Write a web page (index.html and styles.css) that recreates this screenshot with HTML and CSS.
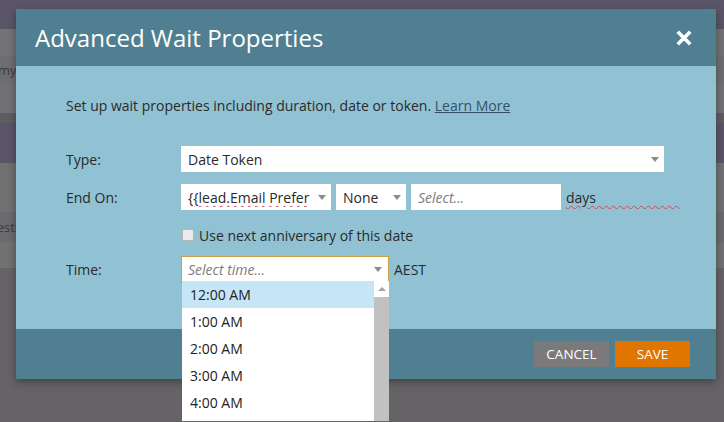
FILE: index.html
```html
<!DOCTYPE html>
<html>
<head>
<meta charset="utf-8">
<title>Advanced Wait Properties</title>
<link rel="stylesheet" href="styles.css">
</head>
<body>
<div class="page">
  <div class="band band-top"></div>
  <div class="band band-a"></div>
  <div class="band band-b"><span class="bg-text">my.</span></div>
  <div class="band band-a2"></div>
  <div class="band band-sep"></div>
  <div class="band band-nav"></div>
  <div class="band band-c"></div>
  <div class="band band-d"><span class="bg-text shift">testi</span></div>
  <div class="band band-e"></div>
</div>

<div class="modal">
  <div class="modal-header">
    <h1 class="modal-title">Advanced Wait Properties</h1>
    <span class="close">
      <svg width="16" height="16" viewBox="0 0 16 16"><path d="M3 3 L13 13 M13 3 L3 13" stroke="#fff" stroke-width="3.6" stroke-linecap="square"/></svg>
    </span>
  </div>
  <div class="modal-body">
    <p class="intro">Set up wait properties including duration, date or token. <a class="learn">Learn More</a></p>
    <div class="form">
      <div class="label">Type:</div>
      <div class="field">
        <div class="select select-type"><span class="sel-text">Date Token</span><i class="caret"></i></div>
      </div>

      <div class="label">End On:</div>
      <div class="field">
        <div class="select select-token"><span class="sel-text clip"><span class="spell">{{lead.Email Prefer</span></span><i class="caret"></i></div>
        <div class="select select-none"><span class="sel-text">None</span><i class="caret"></i></div>
        <div class="input-box"><span class="placeholder">Select...</span></div>
        <span class="unit spell">days                       </span>
      </div>

      <div class="label label-short"></div>
      <div class="field check-row">
        <span class="checkbox"></span>
        <span class="check-label">Use next anniversary of this date</span>
      </div>

      <div class="label">Time:</div>
      <div class="field">
        <div class="time-wrap">
          <div class="select select-time"><span class="placeholder">Select time...</span><i class="caret"></i></div>
          <div class="dropdown">
            <ul class="options">
              <li class="option active">12:00 AM</li>
              <li class="option">1:00 AM</li>
              <li class="option">2:00 AM</li>
              <li class="option">3:00 AM</li>
              <li class="option">4:00 AM</li>
            </ul>
            <div class="scrollbar">
              <div class="scroll-up"><i class="up-caret"></i></div>
              <div class="scroll-thumb"></div>
            </div>
          </div>
        </div>
        <span class="unit">AEST</span>
      </div>
    </div>
  </div>
  <div class="modal-footer">
    <button class="btn btn-cancel">CANCEL</button>
    <button class="btn btn-save">SAVE</button>
  </div>
</div>
</body>
</html>
```

FILE: styles.css
```css
* { box-sizing: border-box; }

html, body {
  margin: 0;
  padding: 0;
}

body {
  width: 724px;
  height: 422px;
  overflow: hidden;
  position: relative;
  background: #656366;
  font-family: "Open Sans", "Liberation Sans", sans-serif;
  color: #2e2e2e;
}

/* dimmed background page */
.page {
  display: flex;
  flex-direction: column;
}
.band { width: 100%; }
.band-top { height: 29px; background: #5a5668; }
.band-a { height: 27px; background: #737274; }
.band-b { height: 27px; background: #6e6d6f; display: flex; align-items: center; }
.band-a2 { height: 30px; background: #727173; }
.band-sep { height: 10px; background: #5f5d60; }
.band-nav { height: 40px; background: #5a5668; }
.band-c { height: 49px; background: #717072; }
.band-d { height: 30px; background: #6b6a6c; display: flex; align-items: center; }
.band-e { height: 26px; background: #717072; }

.bg-text {
  font-size: 13px;
  color: #3c3b3e;
  white-space: nowrap;
  margin-left: -2px;
}
.bg-text.shift { margin-left: -8px; }

/* modal */
.modal {
  position: absolute;
  left: 16px;
  top: 9px;
  width: 700px;
  box-shadow: 0 3px 8px rgba(0, 0, 0, 0.35);
  z-index: 2;
}

.modal-header {
  height: 57px;
  background: #507f92;
  display: flex;
  align-items: center;
  justify-content: space-between;
  padding: 0 24px 0 19px;
}
.modal-title {
  margin: 0;
  font-size: 24px;
  font-weight: 400;
  color: #fff;
}
.close { display: flex; }

.modal-body {
  height: 263px;
  background: #91c2d4;
  padding: 30px 0 0 50px;
}

.intro {
  margin: 0;
  font-size: 14px;
  line-height: 20px;
  color: #2a2a2a;
}
.learn {
  color: #35506a;
  text-decoration: underline;
}

.form {
  margin-top: 30px;
  display: grid;
  grid-template-columns: 115px auto;
  row-gap: 12px;
  font-size: 14px;
}
.label {
  display: flex;
  align-items: center;
  color: #2a2a2a;
  height: 26px;
}
.label-short { height: 22px; }
.field {
  display: flex;
  align-items: center;
  gap: 5px;
}

.select {
  position: relative;
  height: 26px;
  background: #fff;
  display: flex;
  align-items: center;
  padding-left: 7px;
  color: #2a2a2a;
}
.sel-text { white-space: nowrap; }
.sel-text.clip {
  width: 122px;
  overflow: hidden;
}
.caret {
  position: absolute;
  right: 5px;
  top: 11px;
  width: 0;
  height: 0;
  border-left: 4px solid transparent;
  border-right: 4px solid transparent;
  border-top: 5px solid #8b8b8b;
}
.select-type { width: 483px; }
.select-token { width: 150px; }
.select-none { width: 70px; }

.spell {
  text-decoration: underline wavy #d0485a;
  text-decoration-thickness: 1px;
  text-underline-offset: 2px;
  white-space: pre;
}

.input-box {
  width: 150px;
  height: 26px;
  background: #fff;
  display: flex;
  align-items: center;
  padding-left: 7px;
}
.placeholder {
  font-style: italic;
  color: #7c7c7c;
}
.unit { color: #2a2a2a; white-space: pre; }

.check-row {
  height: 22px;
  padding-top: 4px;
  padding-left: 1px;
}
.checkbox {
  width: 12px;
  height: 12px;
  border: 1px solid #b5b5b5;
  border-radius: 2px;
  background: #ececec;
}
.check-label { color: #2a2a2a; }

.time-wrap { position: relative; }
.select-time {
  width: 208px;
  height: 27px;
  border: 1px solid #c8a049;
  padding-left: 6px;
}
.select-time .caret { top: 10px; right: 6px; }

.dropdown {
  position: absolute;
  left: 1px;
  top: 25px;
  width: 207px;
  height: 140px;
  background: #fff;
  display: flex;
  z-index: 5;
}
.options {
  list-style: none;
  margin: 0;
  padding: 0;
  flex: 1;
}
.option {
  height: 27px;
  display: flex;
  align-items: center;
  padding-left: 8px;
  font-size: 14px;
  color: #222;
}
.option.active { background: #c6e6f7; }

.scrollbar {
  width: 15px;
  display: flex;
  flex-direction: column;
}
.scroll-up {
  height: 16px;
  display: flex;
  justify-content: center;
  align-items: center;
}
.up-caret {
  width: 0;
  height: 0;
  border-left: 4px solid transparent;
  border-right: 4px solid transparent;
  border-bottom: 4px solid #a3a3a3;
}
.scroll-thumb {
  flex: 1;
  background: #c1c1c1;
}

.modal-footer {
  height: 50px;
  background: #507f92;
  display: flex;
  justify-content: flex-end;
  align-items: flex-start;
  gap: 6px;
  padding: 12px 26px 0 0;
}
.btn {
  width: 75px;
  height: 26px;
  border: 0;
  font-family: "Open Sans", "Liberation Sans", sans-serif;
  font-size: 13.5px;
  color: #fff;
  padding: 0;
}
.btn-cancel { background: #7b7a7b; }
.btn-save { background: #e07500; }
```
